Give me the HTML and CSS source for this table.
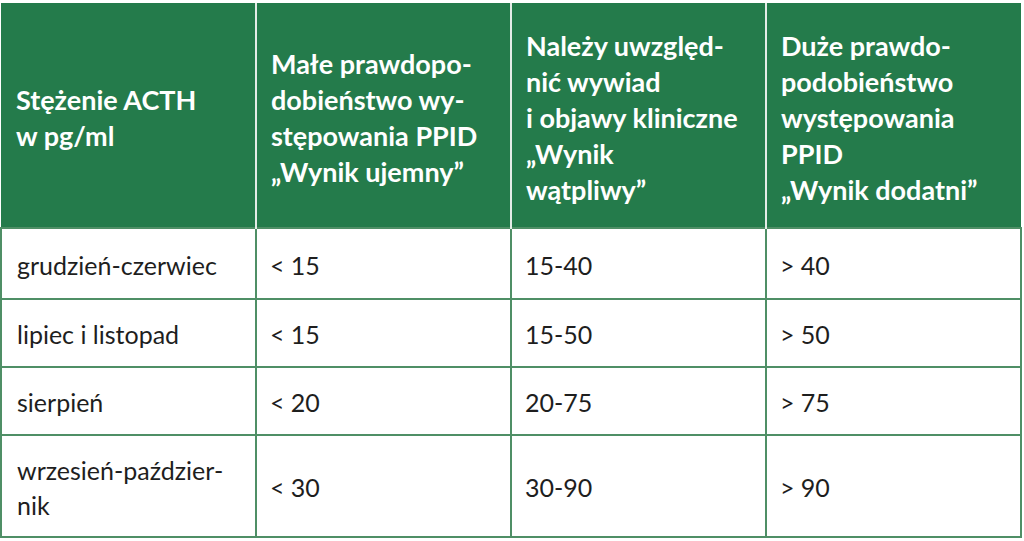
FILE: index.html
```html
<!DOCTYPE html>
<html lang="pl">
<head>
<meta charset="utf-8">
<link rel="stylesheet" href="styles.css">
</head>
<body>
<table class="acth">
  <colgroup><col class="c"><col class="c"><col class="c"><col class="c"></colgroup>
  <thead>
    <tr class="head">
      <th>Stężenie ACTH<br>w pg/ml</th>
      <th>Małe prawdopo-<br>dobieństwo wy-<br>stępowania PPID<br>„Wynik ujemny”</th>
      <th>Należy uwzględ-<br>nić wywiad<br>i objawy kliniczne<br>„Wynik<br>wątpliwy”</th>
      <th>Duże prawdo-<br>podobieństwo<br>występowania<br>PPID<br>„Wynik dodatni”</th>
    </tr>
  </thead>
  <tbody>
    <tr class="r1"><td>grudzień-czerwiec</td><td>&lt;&#8239;15</td><td>15-40</td><td>&gt;&#8239;40</td></tr>
    <tr class="r2"><td>lipiec i listopad</td><td>&lt;&#8239;15</td><td>15-50</td><td>&gt;&#8239;50</td></tr>
    <tr class="r3"><td>sierpień</td><td>&lt;&#8239;20</td><td>20-75</td><td>&gt;&#8239;75</td></tr>
    <tr class="r4"><td>wrzesień-paździer-<br>nik</td><td>&lt;&#8239;30</td><td>30-90</td><td>&gt;&#8239;90</td></tr>
  </tbody>
</table>
</body>
</html>
```
FILE: styles.css
```css
html, body {
  margin: 0;
  padding: 0;
  background: #ffffff;
}
body {
  padding-top: 3px;
}
.acth {
  width: 1022px;
  table-layout: fixed;
  border-collapse: collapse;
  font-family: Lato, "Noto Sans", sans-serif;
  color: #1e1e1e;
}
.acth .c {
  width: 25%;
}
.head {
  height: 225px;
}
.head th {
  background: #247b4b;
  color: #ffffff;
  font-weight: 700;
  font-size: 27px;
  line-height: 36px;
  text-align: left;
  vertical-align: middle;
  padding: 6px 12px 0 14px;
  border-left: 2px solid #e4ece7;
  border-right: 2px solid #e4ece7;
}
.head th:first-child {
  border-left: 0;
  padding-left: 15px;
}
.head th:last-child {
  border-right: 0;
}
.acth td {
  font-size: 25px;
  line-height: 35px;
  padding: 3px 12px 0 13px;
  border: 2px solid #4f8f66;
  vertical-align: middle;
}
.acth td:first-child {
  padding-left: 15px;
}
.r1 { height: 71px; }
.r2 { height: 68px; }
.r3 { height: 68px; }
.r4 { height: 102px; }
```
